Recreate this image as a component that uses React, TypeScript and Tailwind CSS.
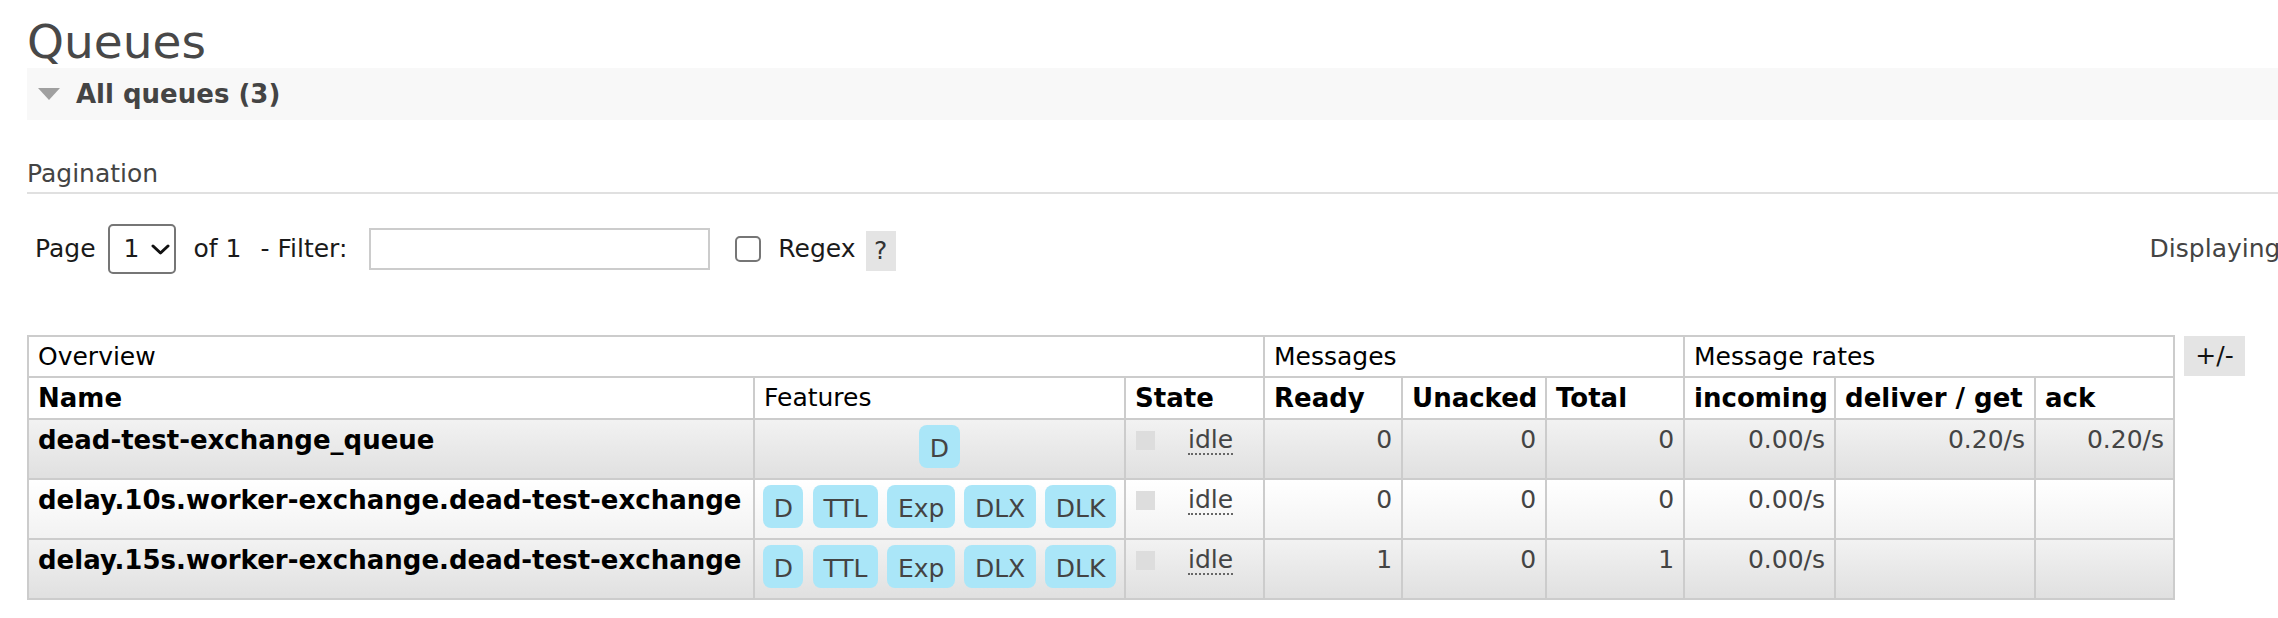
import React from "react";

type Row = {
  name: string;
  features: string[];
  ready: string;
  unacked: string;
  total: string;
  incoming: string;
  deliver: string;
  ack: string;
  alt: 1 | 2;
};

const rows: Row[] = [
  { name: "dead-test-exchange_queue", features: ["D"], ready: "0", unacked: "0", total: "0", incoming: "0.00/s", deliver: "0.20/s", ack: "0.20/s", alt: 1 },
  { name: "delay.10s.worker-exchange.dead-test-exchange", features: ["D", "TTL", "Exp", "DLX", "DLK"], ready: "0", unacked: "0", total: "0", incoming: "0.00/s", deliver: "", ack: "", alt: 2 },
  { name: "delay.15s.worker-exchange.dead-test-exchange", features: ["D", "TTL", "Exp", "DLX", "DLK"], ready: "1", unacked: "0", total: "1", incoming: "0.00/s", deliver: "", ack: "", alt: 1 },
];

function Badge({ label }: { label: string }) {
  return (
    <span className="inline-block h-[43px] px-[10.5px] pt-[9px] pb-[4px] leading-[30px] rounded-[8px] bg-[#aae6f8] text-[#444] text-[25px]">
      {label}
    </span>
  );
}

export default function App() {
  const th = "border-2 border-[#ccc] bg-white text-left align-middle";
  return (
    <div className="w-[2278px] h-[618px] overflow-hidden bg-white font-['DejaVu_Sans','Verdana',sans-serif]">
      <div className="w-[2700px] pl-[27px]">
        <h1 className="pt-[18px] mb-[3px] text-[47px] leading-[47px] font-normal text-[#484848]">Queues</h1>

        <div className="h-[52px] bg-[#f8f8f8] flex items-center pl-[11px]">
          <svg width="22" height="12" viewBox="0 0 22 12">
            <polygon points="0,0 22,0 11,12" fill="#a0a0a0" />
          </svg>
          <span className="ml-[16px] text-[26px] leading-[30px] font-bold text-[#444]">All queues (3)</span>
        </div>

        <div className="pt-[39px] pb-[3px] text-[25px] leading-[30px] text-[#444] border-b-2 border-[#e0e0e0]">Pagination</div>

        <div className="mt-[26px] h-[58px] flex items-center pl-[8px] text-[25px] leading-[30px] text-[#1a1a1a]">
          <span>Page</span>
          <div className="ml-[12px] w-[68px] h-[50px] border-2 border-[#767676] rounded-[5px] flex items-center pl-[14px]">
            <span>1</span>
            <svg className="ml-[12px]" width="19" height="11" viewBox="0 0 19 11">
              <path d="M2 2 L9.5 9 L17 2" fill="none" stroke="#111" strokeWidth="3" strokeLinecap="round" strokeLinejoin="round" />
            </svg>
          </div>
          <span className="ml-[18px]">of 1</span>
          <span className="ml-[19px]">- Filter:</span>
          <div className="ml-[22px] w-[341px] h-[42px] border-2 border-[#cccccc] bg-white" />
          <div className="ml-[25px] w-[26px] h-[26px] border-2 border-[#767676] rounded-[5px] bg-white" />
          <span className="ml-[17px]">Regex</span>
          <span className="ml-[10px] mt-[4px] w-[30px] h-[40px] bg-[#e4e4e4] flex items-center justify-center text-[#333]">?</span>
          <span className="ml-[1254px] text-[#444] whitespace-nowrap">Displaying 3 items , page size up to:</span>
        </div>

        <div className="mt-[57px] flex items-start">
          <table className="table-fixed border-collapse w-[2147px] text-[25px] leading-[30px]">
            <colgroup>
              <col className="w-[726px]" />
              <col className="w-[371px]" />
              <col className="w-[139px]" />
              <col className="w-[138px]" />
              <col className="w-[144px]" />
              <col className="w-[138px]" />
              <col className="w-[151px]" />
              <col className="w-[200px]" />
              <col className="w-[139px]" />
            </colgroup>
            <thead>
              <tr className="h-[41px]">
                <th colSpan={3} className={`${th} pl-[9px] font-normal text-black`}>Overview</th>
                <th colSpan={3} className={`${th} pl-[9px] font-normal text-black`}>Messages</th>
                <th colSpan={3} className={`${th} pl-[9px] font-normal text-black`}>Message rates</th>
              </tr>
              <tr className="h-[42px]">
                <th className={`${th} pl-[9px] font-bold text-[26px] text-black`}>Name</th>
                <th className={`${th} pl-[9px] font-normal text-black`}>Features</th>
                <th className={`${th} pl-[9px] font-bold text-[26px] text-black`}>State</th>
                <th className={`${th} pl-[9px] font-bold text-[26px] text-black`}>Ready</th>
                <th className={`${th} pl-[9px] font-bold text-[26px] text-black`}>Unacked</th>
                <th className={`${th} pl-[9px] font-bold text-[26px] text-black`}>Total</th>
                <th className={`${th} pl-[9px] font-bold text-[26px] text-black`}>incoming</th>
                <th className={`${th} pl-[9px] font-bold text-[26px] text-black`}>deliver / get</th>
                <th className={`${th} pl-[9px] font-bold text-[26px] text-black`}>ack</th>
              </tr>
            </thead>
            <tbody>
              {rows.map((r) => {
                const bg =
                  r.alt === 1
                    ? "bg-linear-to-b from-[#f2f2f2] to-[#e0e0e0]"
                    : "bg-linear-to-b from-white to-[#f2f2f2]";
                const td = `border-2 border-[#ccc] align-top pt-[5px] ${bg}`;
                const num = `${td} text-right pr-[9px] text-[#444]`;
                return (
                  <tr key={r.name} className="h-[60px]">
                    <td className={`${td} pl-[9px] font-bold text-[26px] text-black whitespace-nowrap`}>{r.name}</td>
                    <td className={`${td} text-center pt-[4px]`}>
                      <div className="inline-flex gap-[9.5px]">
                        {r.features.map((f) => (
                          <Badge key={f} label={f} />
                        ))}
                      </div>
                    </td>
                    <td className={td}>
                      <div className="flex items-start pl-[10px]">
                        <span className="mt-[6px] w-[19px] h-[19px] bg-[#dddddd]" />
                        <span className="ml-[33px] text-[#444] border-b-2 border-dotted border-[#666] leading-[26px] mt-[2px]">idle</span>
                      </div>
                    </td>
                    <td className={num}>{r.ready}</td>
                    <td className={num}>{r.unacked}</td>
                    <td className={num}>{r.total}</td>
                    <td className={num}>{r.incoming}</td>
                    <td className={num}>{r.deliver}</td>
                    <td className={num}>{r.ack}</td>
                  </tr>
                );
              })}
            </tbody>
          </table>
          <div className="ml-[9px] mt-[1px] w-[61px] h-[40px] bg-[#e4e4e4] flex items-center justify-center text-[25px] text-[#111]">+/-</div>
        </div>
      </div>
    </div>
  );
}
